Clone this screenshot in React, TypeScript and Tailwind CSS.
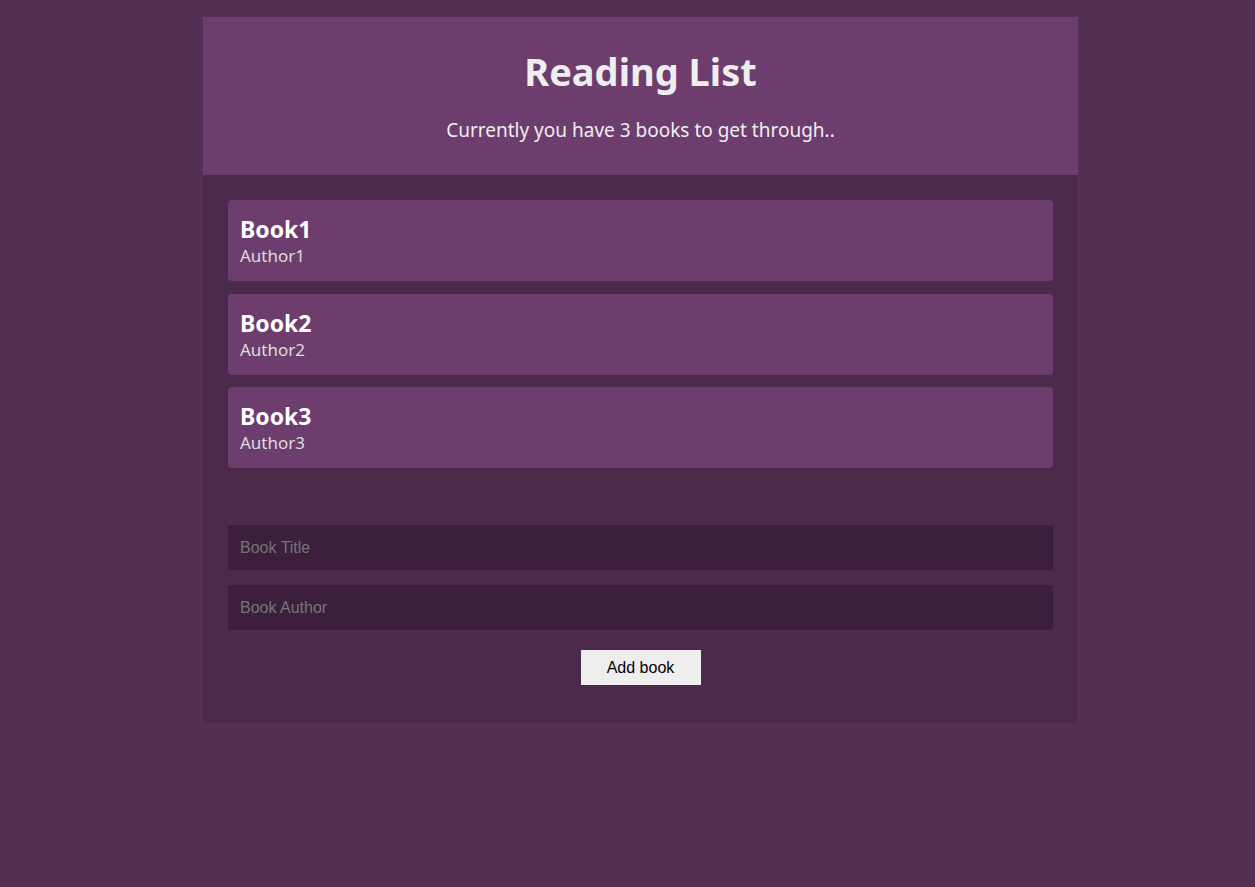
import { useState } from "react";

interface Book {
  title: string;
  author: string;
}

const initialBooks: Book[] = [
  { title: "Book1", author: "Author1" },
  { title: "Book2", author: "Author2" },
  { title: "Book3", author: "Author3" },
];

export default function App() {
  const [books, setBooks] = useState<Book[]>(initialBooks);
  const [title, setTitle] = useState("");
  const [author, setAuthor] = useState("");

  const addBook = () => {
    if (!title || !author) return;
    setBooks([...books, { title, author }]);
    setTitle("");
    setAuthor("");
  };

  return (
    <div className="min-h-screen bg-[#553055] pt-[17px] font-['Noto_Sans',sans-serif]">
      <div className="ml-[203px] w-[875px]">
        {/* Header */}
        <div className="h-[158px] bg-[#6d3d6d] text-center text-[#eeeeee] pt-[30px]">
          <h1 className="text-[38px] font-bold leading-[48px]">Reading List</h1>
          <p className="mt-[23px] text-[19px] leading-[24px]">
            Currently you have {books.length} books to get through..
          </p>
        </div>

        {/* Book list + form */}
        <div className="bg-[#4c2a4c] px-[25px] pt-[25px] pb-[38px]">
          <ul className="flex flex-col gap-[12.5px]">
            {books.map((b) => (
              <li key={b.title} className="h-[81px] rounded-[4px] bg-[#6d3d6d] px-[12px] pt-[15px]">
                <h3 className="text-[23px] font-bold leading-[28px] text-white">{b.title}</h3>
                <p className="mt-[1px] text-[17px] leading-[24px] text-[#dddddd]">{b.author}</p>
              </li>
            ))}
          </ul>

          <form
            className="mt-[57px] flex flex-col items-center font-['Liberation_Sans',Arial,sans-serif]"
            onSubmit={(e) => {
              e.preventDefault();
              addBook();
            }}
          >
            <input
              type="text"
              placeholder="Book Title"
              value={title}
              onChange={(e) => setTitle(e.target.value)}
              className="h-[45px] w-full bg-[#3c1f3c] px-[12px] text-[16px] text-[#eeeeee] placeholder:text-[#757575] outline-none"
            />
            <input
              type="text"
              placeholder="Book Author"
              value={author}
              onChange={(e) => setAuthor(e.target.value)}
              className="mt-[15px] h-[45px] w-full bg-[#3c1f3c] px-[12px] text-[16px] text-[#eeeeee] placeholder:text-[#757575] outline-none"
            />
            <button
              type="submit"
              className="mt-[20px] h-[35px] w-[120px] bg-[#eeeeee] text-[16px] text-black"
            >
              Add book
            </button>
          </form>
        </div>
      </div>
    </div>
  );
}
